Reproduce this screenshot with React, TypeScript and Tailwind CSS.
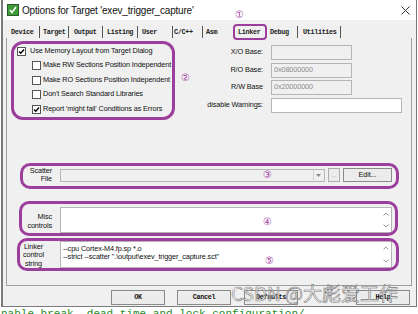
const tabs = [
  { label: 'Device', cls: 'w-[33px] pl-[4px] border-r' },
  { label: 'Target', cls: 'w-[29px] pl-[3px] border-r' },
  { label: 'Output', cls: 'w-[34px] pl-[5px] border-r' },
  { label: 'Listing', cls: 'w-[35px] pl-[4px] border-r' },
  { label: 'User', cls: 'w-[35px] pl-[4px] border-r' },
  { label: 'C/C++', cls: 'w-[30px] pl-[1px] border-r' },
  { label: 'Asm', cls: 'w-[29px] pl-[3px]' },
  { label: 'Linker', cls: 'w-[36px] pl-[6px]' },
  { label: 'Debug', cls: 'w-[30px] pl-[2px] border-r' },
  { label: 'Utilities', cls: 'w-[43px] pl-[5px] border-r' },
];

const mono = "font-['Liberation_Mono',monospace] font-bold text-[6.8px] tracking-[-0.35px]";
const sans = "font-['Liberation_Sans',Arial,sans-serif]";

function Check({ on }: { on?: boolean }) {
  return (
    <div className="w-[9px] h-[9px] bg-white border border-[#555] flex items-center justify-center shrink-0">
      {on && (
        <svg width="7" height="7" viewBox="0 0 7 7">
          <path d="M1 3.5 L2.8 5.3 L6 1.5" fill="none" stroke="#000" strokeWidth="1.4" />
        </svg>
      )}
    </div>
  );
}

function ScrollArrows() {
  return (
    <div className="w-[10px] flex flex-col justify-between items-center py-[4px]">
      <svg width="6" height="4" viewBox="0 0 6 4">
        <path d="M0.5 3.5 L3 1 L5.5 3.5" fill="none" stroke="#9a9a9a" strokeWidth="1" />
      </svg>
      <svg width="6" height="4" viewBox="0 0 6 4">
        <path d="M0.5 0.5 L3 3 L5.5 0.5" fill="none" stroke="#9a9a9a" strokeWidth="1" />
      </svg>
    </div>
  );
}

export default function App() {
  return (
    <div className={`relative w-[418px] h-[314px] overflow-hidden bg-white ${sans}`}>
      <div className="ml-[1px] w-[416px] h-[307px] bg-[#f0f0f0] border-l-2 border-r border-b border-[#7a7a7a] flex flex-col">
        {/* title bar */}
        <div className="h-[20px] bg-white flex items-center pl-[4px]">
          <svg width="12" height="12" viewBox="0 0 12 12">
            <rect x="0.5" y="0.5" width="11" height="11" fill="#3f9a3a" stroke="#2a5a2a" />
            <path d="M3 6 L5 8.5 L9 3" fill="none" stroke="#fff" strokeWidth="1.6" />
          </svg>
          <span className="ml-[3px] text-[10px] text-[#111] tracking-[-0.2px]">Options for Target 'exev_trigger_capture'</span>
          <svg className="ml-auto mr-[6px]" width="9" height="9" viewBox="0 0 9 9">
            <path d="M0.5 0.5 L8.5 8.5 M8.5 0.5 L0.5 8.5" stroke="#333" strokeWidth="1" />
          </svg>
        </div>

        {/* tabs */}
        <div className="h-[18px] pt-[6px] pl-[4px] flex">
          {tabs.map((t) => (
            <div key={t.label} className={`h-[12px] flex items-center border-[#555] text-[#222] ${mono} ${t.cls}`}>
              {t.label}
            </div>
          ))}
        </div>

        {/* panel */}
        <div className="ml-[3px] w-[406px] h-[248px] border-l border-r border-b border-[#a0a0a0] flex flex-col text-[7.3px] tracking-[-0.12px] text-[#111] whitespace-nowrap">
          <div className="flex h-[78.5px]">
            <div className="w-[170px] pl-[10px] pt-[6px] flex flex-col">
              <div className="h-[14.5px] flex items-center gap-[4px]">
                <Check on />
                <span>Use Memory Layout from Target Dialog</span>
              </div>
              <div className="h-[14.5px] flex items-center gap-[1px] ml-[15px]">
                <Check />
                <span className="ml-[1px]">Make RW Sections Position Independent</span>
              </div>
              <div className="h-[14.5px] flex items-center gap-[1px] ml-[15px]">
                <Check />
                <span className="ml-[1px]">Make RO Sections Position Independent</span>
              </div>
              <div className="h-[14.5px] flex items-center gap-[1px] ml-[15px]">
                <Check />
                <span className="ml-[1px]">Don't Search Standard Libraries</span>
              </div>
              <div className="h-[14.5px] flex items-center gap-[1px] ml-[15px]">
                <Check on />
                <span className="ml-[1px]">Report 'might fail' Conditions as Errors</span>
              </div>
            </div>
            <div className="pt-[7px] flex flex-col gap-[2.5px]">
              <div className="h-[15px] flex items-center">
                <span className="w-[86px] text-right">X/O Base:</span>
                <div className="ml-[8px] w-[81px] h-[15px] bg-[#f0f0f0] border border-[#b5b5b5]" />
              </div>
              <div className="h-[15px] flex items-center">
                <span className="w-[86px] text-right">R/O Base:</span>
                <div className="ml-[8px] w-[81px] h-[15px] bg-[#f0f0f0] border border-[#b5b5b5] pl-[2px] flex items-center text-[#8c8c8c]">0x08000000</div>
              </div>
              <div className="h-[15px] flex items-center">
                <span className="w-[86px] text-right">R/W Base</span>
                <div className="ml-[8px] w-[81px] h-[15px] bg-[#f0f0f0] border border-[#b5b5b5] pl-[2px] flex items-center text-[#8c8c8c]">0x20000000</div>
              </div>
              <div className="h-[15px] flex items-center">
                <span className="w-[86px] text-right">disable Warnings:</span>
                <div className="ml-[8px] w-[131px] h-[15px] bg-white border border-[#b5b5b5]" />
              </div>
            </div>
          </div>

          {/* scatter */}
          <div className="mt-[51.5px] flex items-center h-[14px]">
            <div className="w-[45px] text-right leading-[8.5px]">Scatter<br />File</div>
            <div className="ml-[8px] w-[265px] h-[13px] bg-[#f0f0f0] border border-[#b5b5b5] flex justify-end items-center pr-[2px]">
              <div className="w-[9px] h-[9px] border-l border-[#cfcfcf] flex items-center justify-center">
                <svg width="5" height="3" viewBox="0 0 5 3"><path d="M0 0 H5 L2.5 3 Z" fill="#888" /></svg>
              </div>
            </div>
            <div className="ml-[3px] w-[12px] h-[14px] bg-[#ececec] border border-[#adadad] flex items-center justify-center text-[#999] text-[6px]">...</div>
            <div className="ml-[3px] w-[49px] h-[14px] bg-[#ececec] border border-[#8a8a8a] flex items-center justify-center">Edit...</div>
          </div>

          {/* misc */}
          <div className="mt-[25px] flex items-center h-[26px]">
            <div className="w-[45px] text-right leading-[9.5px] pt-[2px]">Misc<br />controls</div>
            <div className="ml-[8px] w-[332px] h-[26px] bg-white border border-[#b5b5b5] flex justify-end">
              <ScrollArrows />
            </div>
          </div>

          {/* linker control string */}
          <div className="mt-[8px] flex items-center h-[27px]">
            <div className="w-[45px] text-center leading-[8.2px] pl-[8px] pt-[2px]">Linker<br />control<br />string</div>
            <div className="ml-[8px] w-[332px] h-[27px] bg-white border border-[#b5b5b5] flex">
              <div className="flex-1 pl-[2px] pt-[3px] leading-[8px]">
                <div>--cpu Cortex-M4.fp.sp *.o</div>
                <div>--strict --scatter ".\output\exev_trigger_capture.sct"</div>
              </div>
              <ScrollArrows />
            </div>
          </div>
        </div>

        {/* buttons */}
        <div className="mt-[4px] flex">
          <div className={`ml-[108px] w-[54px] h-[15px] bg-[#ececec] border border-[#8a8a8a] flex items-center justify-center text-[#111] ${mono}`}>OK</div>
          <div className={`ml-[12px] w-[54px] h-[15px] bg-[#ececec] border border-[#8a8a8a] flex items-center justify-center text-[#111] ${mono}`}>Cancel</div>
          <div className={`ml-[13px] w-[54px] h-[15px] bg-[#ececec] border border-[#8a8a8a] flex items-center justify-center text-[#111] ${mono}`}>Defaults</div>
          <div className={`ml-[58px] w-[54px] h-[15px] bg-[#ececec] border border-[#8a8a8a] flex items-center justify-center text-[#111] ${mono}`}>Help</div>
        </div>
      </div>

      {/* editor text behind the dialog */}
      <div className="mt-[2px] pl-[1px] font-['Liberation_Mono',monospace] text-[11px] leading-[11px] text-[#1f8a1f] whitespace-nowrap">
        nable break, dead time and lock configuration/
      </div>

      {/* annotations */}
      <div className="absolute left-[233px] top-[24px] w-[34px] h-[16px] border-[2.5px] border-[#9c3f9c] rounded-[4px]" />
      <div className="absolute left-[11px] top-[41px] w-[164px] h-[79px] border-[3px] border-[#9c3f9c] rounded-[12px]" />
      <div className="absolute left-[20px] top-[163px] w-[379px] h-[26px] border-[3px] border-[#9c3f9c] rounded-[10px]" />
      <div className="absolute left-[19px] top-[201px] w-[379px] h-[35px] border-[3px] border-[#9c3f9c] rounded-[10px]" />
      <div className="absolute left-[17px] top-[238px] w-[382px] h-[33px] border-[3px] border-[#9c3f9c] rounded-[10px]" />
      <span className="absolute left-[235px] top-[9px] text-[10px] leading-[12px] text-[#a040a0] font-['DejaVu_Sans',sans-serif]">①</span>
      <span className="absolute left-[181px] top-[72px] text-[10px] leading-[12px] text-[#a040a0] font-['DejaVu_Sans',sans-serif]">②</span>
      <span className="absolute left-[263px] top-[169px] text-[10px] leading-[12px] text-[#a040a0] font-['DejaVu_Sans',sans-serif]">③</span>
      <span className="absolute left-[263px] top-[216px] text-[10px] leading-[12px] text-[#a040a0] font-['DejaVu_Sans',sans-serif]">④</span>
      <span className="absolute left-[265px] top-[255px] text-[10px] leading-[12px] text-[#a040a0] font-['DejaVu_Sans',sans-serif]">⑤</span>

      {/* watermark */}
      <div className="absolute left-[231px] top-[282px] text-[19px] leading-[22px] text-white/50 [-webkit-text-stroke:0.6px_#7a7a7a] font-['Noto_Sans_CJK_SC',sans-serif] whitespace-nowrap">
        CSDN @大彪爱工作
      </div>
    </div>
  );
}
